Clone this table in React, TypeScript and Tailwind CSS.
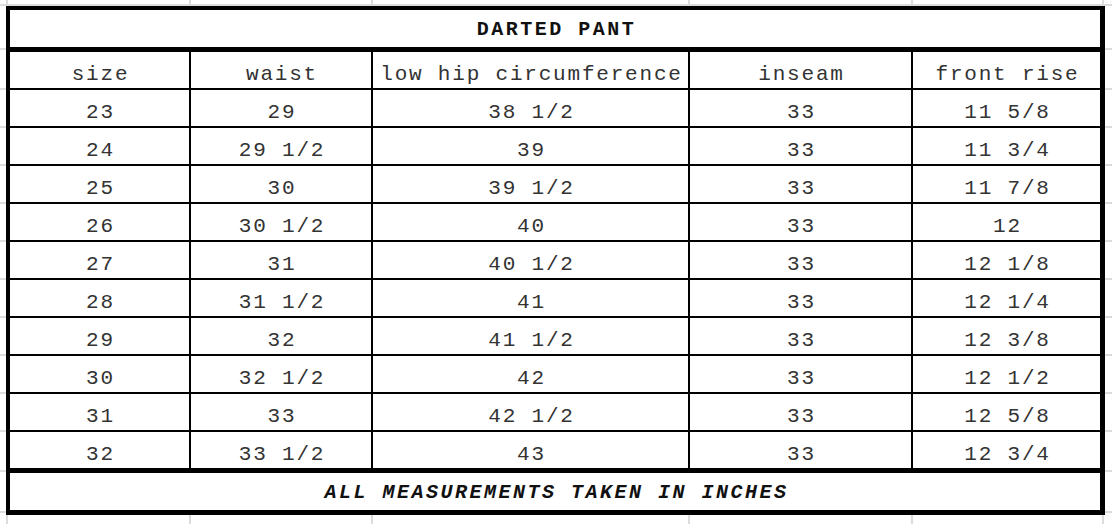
import React from "react";

const rows: string[][] = [
  ["23", "29", "38 1/2", "33", "11 5/8"],
  ["24", "29 1/2", "39", "33", "11 3/4"],
  ["25", "30", "39 1/2", "33", "11 7/8"],
  ["26", "30 1/2", "40", "33", "12"],
  ["27", "31", "40 1/2", "33", "12 1/8"],
  ["28", "31 1/2", "41", "33", "12 1/4"],
  ["29", "32", "41 1/2", "33", "12 3/8"],
  ["30", "32 1/2", "42", "33", "12 1/2"],
  ["31", "33", "42 1/2", "33", "12 5/8"],
  ["32", "33 1/2", "43", "33", "12 3/4"],
];

const headers = ["size", "waist", "low hip circumference", "inseam", "front rise"];

const gridX = [7, 190, 372, 689, 912, 1103];
const gridY = [5, 49, 89, 127, 165, 203, 241, 279, 317, 355, 393, 431, 471, 512];

const cell =
  "bg-white flex items-center justify-center text-[21px] leading-none tracking-[1.8px] pl-[2px] pt-[9px] whitespace-pre font-normal text-[#333]";

export default function App() {
  return (
    <div className="relative w-[1112px] h-[524px] bg-white overflow-hidden p-[6px] font-['Liberation_Mono','Courier_New',monospace] text-[#111]">
      <svg className="absolute inset-0" width="1112" height="524" aria-hidden="true">
        {gridX.map((x) => (
          <line key={"x" + x} x1={x} y1={0} x2={x} y2={524} stroke="#dcdcdc" strokeWidth={2} />
        ))}
        {gridY.map((y) => (
          <line key={"y" + y} x1={0} y1={y} x2={1112} y2={y} stroke="#dcdcdc" strokeWidth={2} />
        ))}
      </svg>
      <div className="relative w-[1099px] h-[509px] bg-white border-black border-l-4 border-t-4 border-r-[5px] border-b-[5px] flex flex-col">
        <div className="h-[37px] flex items-center justify-center font-bold text-[20px] leading-none tracking-[2.5px] pl-[3px] pt-[3px] border-b-[5px] border-black box-content">
          DARTED PANT
        </div>
        <div className="grid grid-cols-[179px_180px_315px_221px_187px] grid-rows-[repeat(11,36px)] gap-[2px] bg-black">
          {headers.map((h) => (
            <div key={h} className={cell}>
              {h}
            </div>
          ))}
          {rows.map((r, i) =>
            r.map((c, j) => (
              <div key={i + "-" + j} className={cell}>
                {c}
              </div>
            ))
          )}
        </div>
        <div className="h-[37px] mt-auto flex items-center justify-center font-bold italic text-[20px] leading-none tracking-[2.5px] pl-[3px] pt-[3px] border-t-[5px] border-black box-content">
          ALL MEASUREMENTS TAKEN IN INCHES
        </div>
      </div>
    </div>
  );
}
